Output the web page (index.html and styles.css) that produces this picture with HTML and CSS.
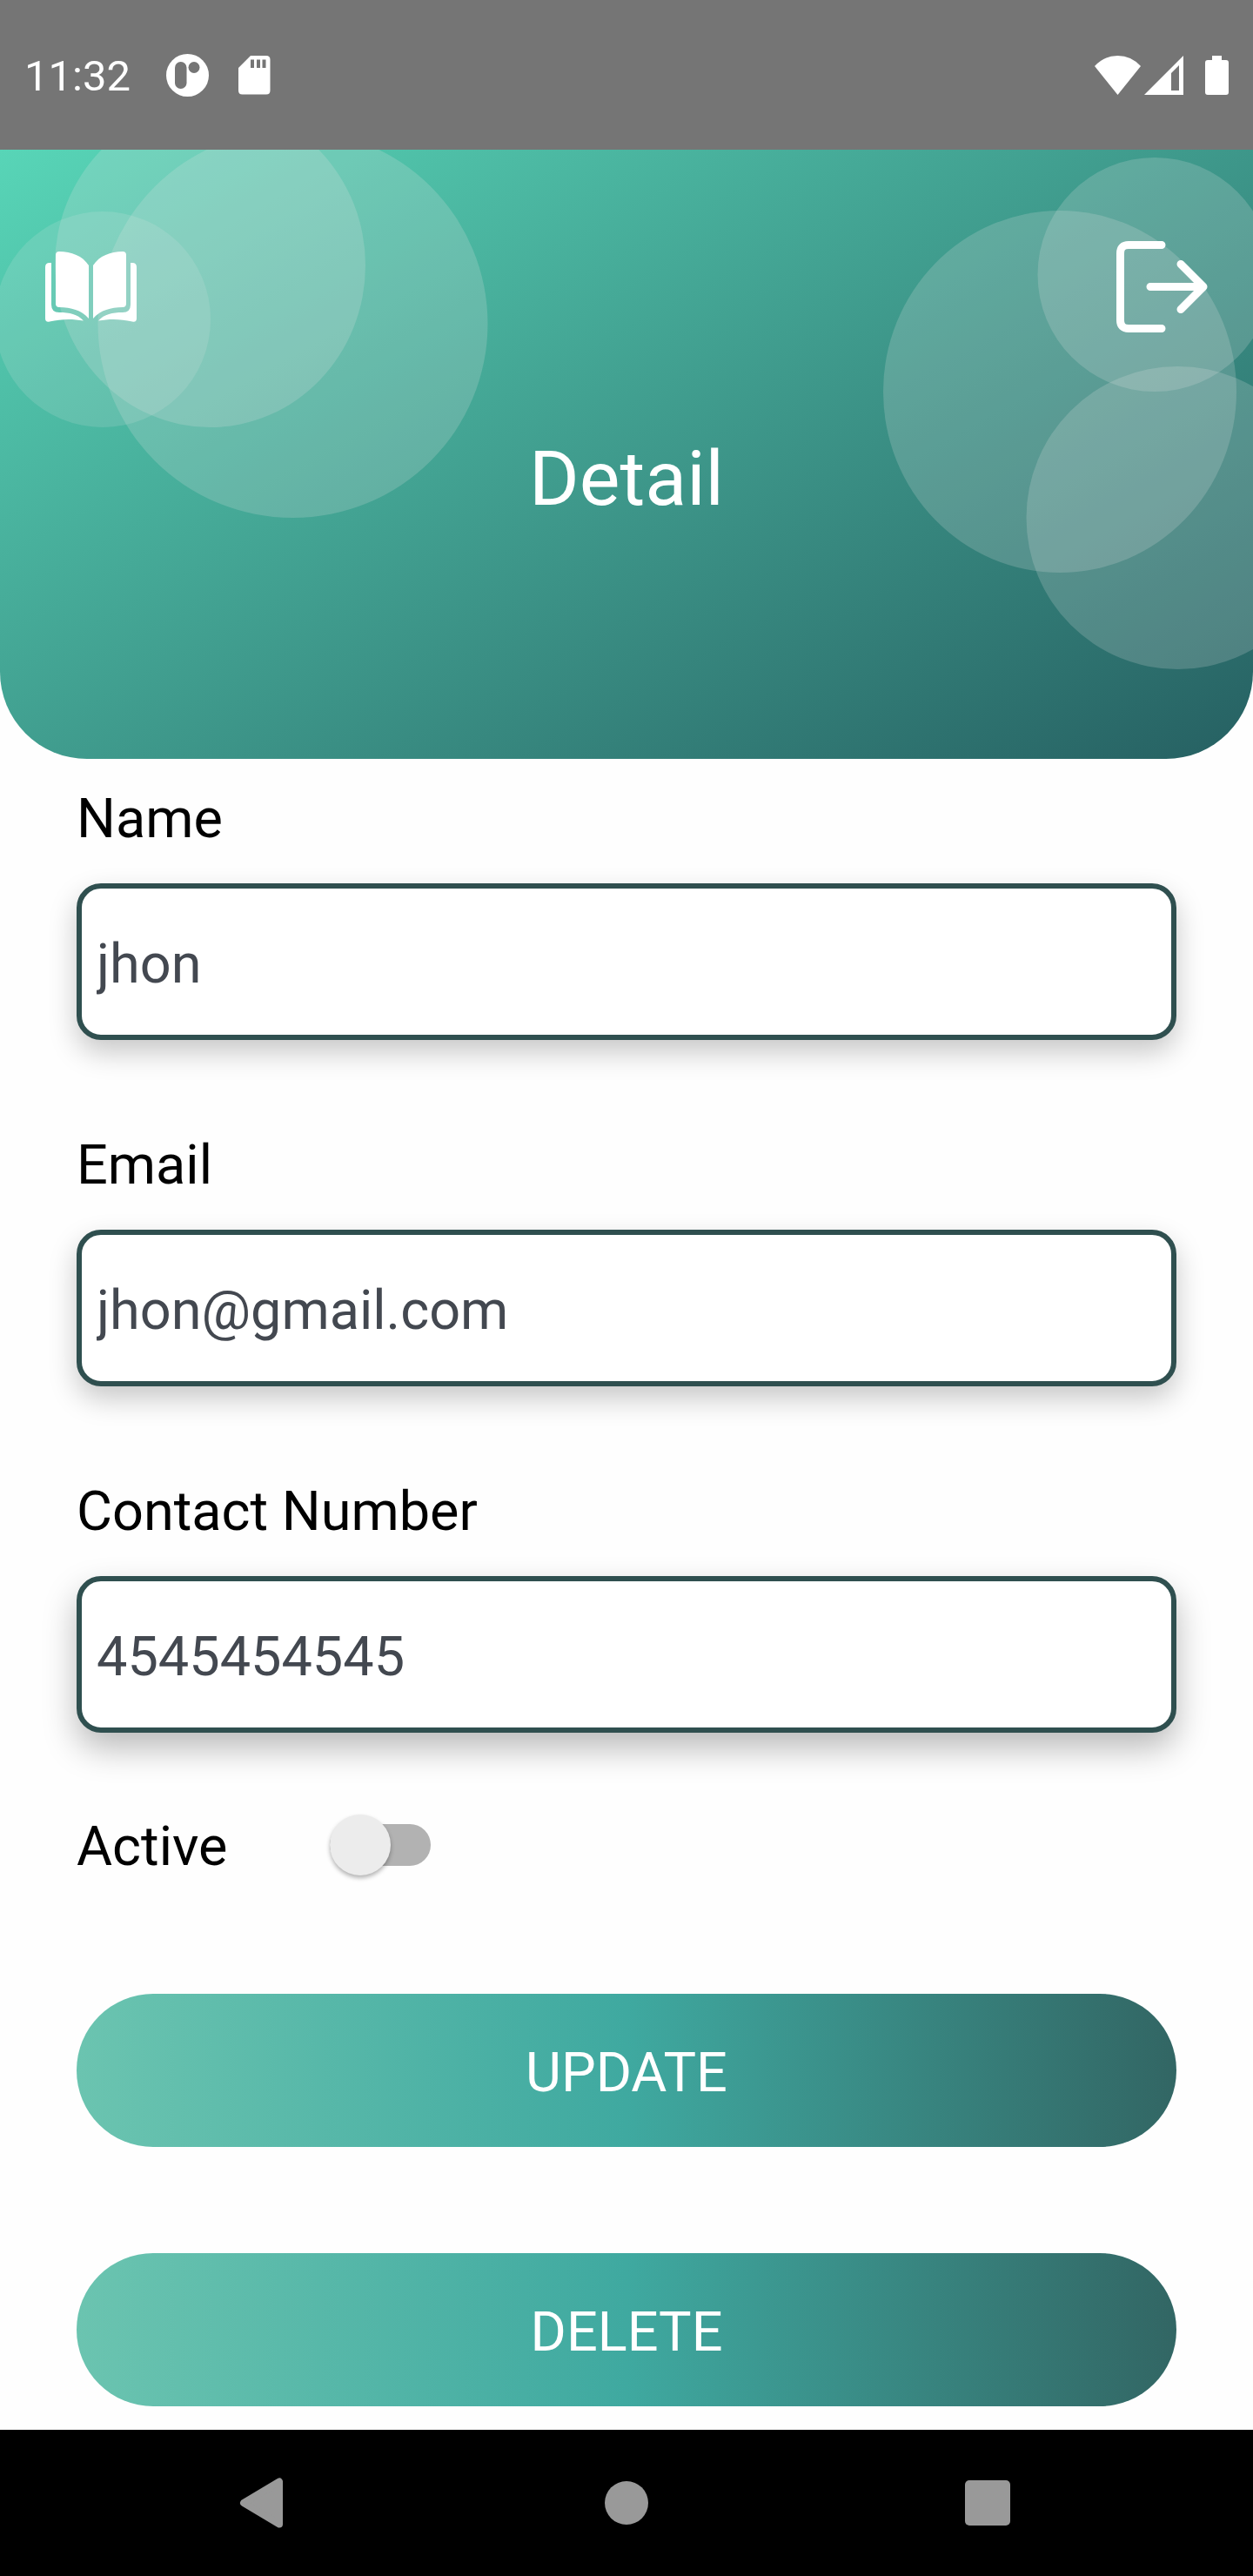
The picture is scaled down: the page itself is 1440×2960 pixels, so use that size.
FILE: index.html
```html
<!DOCTYPE html>
<html lang="en">
<head>
  <meta charset="utf-8">
  <meta name="viewport" content="width=device-width, initial-scale=1">
  <title>Detail</title>
  <link rel="stylesheet" href="styles.css">
</head>
<body>
  <div class="status-bar">
    <div class="status-group">
      <span class="clock">11:32</span>
      <svg width="49" height="49" viewBox="0 0 49 49" aria-hidden="true">
        <circle cx="24.5" cy="24.5" r="24.5" fill="#fff"/>
        <rect x="10" y="9" width="13.500" height="31" rx="6.700" fill="#757575"/>
        <circle cx="32" cy="15.500" r="6.500" fill="#757575"/>
      </svg>
      <svg width="37" height="45" viewBox="0 0 37 45" aria-hidden="true">
        <path fill="#fff" fill-rule="evenodd" d="M14 0H32Q36.500 0 36.500 4.500V40Q36.500 44.500 32 44.500H4.500Q0 44.500 0 40V14ZM14 4.500V14H18V4.500ZM21 4.500V14H25V4.500ZM27.500 4.500V14H31.500V4.500Z"/>
      </svg>
    </div>
    <div class="status-group status-group-end">
      <div class="signals">
        <svg width="53" height="45" viewBox="0 0 53 45" aria-hidden="true">
          <path fill="#fff" d="M26.500 45L0 12Q11 0 26.500 0T53 12Z"/>
        </svg>
        <svg width="45" height="45" viewBox="0 0 45 45" aria-hidden="true">
          <path fill="#fff" fill-rule="evenodd" d="M0 45L45 0V45ZM31 20V40H40V11Z"/>
        </svg>
      </div>
      <svg width="27" height="45" viewBox="0 0 27 45" aria-hidden="true">
        <path fill="#fff" d="M8 0H19V5H24Q27 5 27 8V42Q27 45 24 45H3Q0 45 0 42V8Q0 5 3 5H8Z"/>
      </svg>
    </div>
  </div>

  <header class="hero">
    <svg class="bubbles" viewBox="0 0 1440 700" preserveAspectRatio="none" aria-hidden="true">
      <ellipse class="bubble-faint" cx="118" cy="195" rx="124" ry="124"/>
      <ellipse cx="241.500" cy="133" rx="178.500" ry="186"/>
      <ellipse cx="336.500" cy="200" rx="224" ry="223"/>
      <ellipse cx="1218" cy="278" rx="203" ry="208"/>
      <ellipse cx="1327" cy="143.500" rx="134.500" ry="134.500"/>
      <ellipse cx="1353.500" cy="423" rx="174" ry="174"/>
    </svg>
    <div class="toolbar">
      <button class="icon-button" type="button" aria-label="Catalogue">
        <svg width="105" height="105" viewBox="0 0 105 105" fill="#fff" aria-hidden="true">
          <path d="M12 16Q12 12 16 12C30 12 43 17 50 28V89C41 79 30 76.500 16 76Q12 76 12 72Z"/>
          <path d="M93 16Q93 12 89 12C75 12 62 17 55 28V89C64 79 75 76.500 89 76Q93 76 93 72Z"/>
          <path d="M0 30Q0 25 5 25H7V73Q7 82 16 82C28 82 37 84 44 91.500C30 89 18 89.500 5 92.500Q0 93.500 0 89Z"/>
          <path d="M105 30Q105 25 100 25H98V73Q98 82 89 82C77 82 68 84 61 91.500C75 89 87 89.500 100 92.500Q105 93.500 105 89Z"/>
        </svg>
      </button>
      <button class="icon-button" type="button" aria-label="Log out">
        <svg width="105" height="105" viewBox="0 0 105 105" fill="none" stroke="#fff" stroke-width="9" stroke-linecap="round" stroke-linejoin="round" aria-hidden="true">
          <path d="M52 4.500H14Q4.500 4.500 4.500 14V91Q4.500 100.500 14 100.500H52"/>
          <path d="M39 52.500H100M74 26.500L100 52.500L74 78.500"/>
        </svg>
      </button>
    </div>
    <h1 class="title">Detail</h1>
  </header>

  <main class="content">
    <form class="form">
      <div class="field">
        <label for="name">Name</label>
        <input class="text-input" id="name" type="text" value="jhon">
      </div>
      <div class="field">
        <label for="email">Email</label>
        <input class="text-input" id="email" type="email" value="jhon@gmail.com">
      </div>
      <div class="field field-low">
        <label for="contact">Contact Number</label>
        <input class="text-input" id="contact" type="tel" value="4545454545">
      </div>
      <div class="switch-row">
        <label class="switch-label" for="active">Active</label>
        <input class="switch" id="active" type="checkbox" role="switch">
      </div>
      <div class="actions">
        <button class="action" type="button">UPDATE</button>
        <button class="action" type="button">DELETE</button>
      </div>
    </form>
  </main>

  <nav class="nav-bar" aria-label="System">
    <button class="nav-button" type="button" aria-label="Back">
      <svg width="60" height="60" viewBox="0 0 60 60" aria-hidden="true">
        <path fill="#999" stroke="#999" stroke-width="8" stroke-linejoin="round" d="M5 30L46 5.500V54.500Z"/>
      </svg>
    </button>
    <button class="nav-button" type="button" aria-label="Home">
      <svg width="60" height="60" viewBox="0 0 60 60" aria-hidden="true">
        <circle cx="30" cy="30" r="25" fill="#999"/>
      </svg>
    </button>
    <button class="nav-button" type="button" aria-label="Recent apps">
      <svg width="60" height="60" viewBox="0 0 60 60" aria-hidden="true">
        <rect x="4" y="4" width="52" height="52" rx="5" fill="#999"/>
      </svg>
    </button>
  </nav>
</body>
</html>
```
FILE: styles.css
```css
*,
*::before {
  box-sizing: border-box;
}

body {
  display: flex;
  flex-direction: column;
  min-height: 100vh;
  margin: 0;
  background: #fefefe;
  color: #000;
  font-family: Roboto, "Liberation Sans", sans-serif;
  font-size: 63px;
  line-height: 74px;
}

svg {
  display: block;
  flex: none;
}

button {
  padding: 0;
  border: 0;
  background: none;
  color: inherit;
  font: inherit;
}

/* Status bar */
.status-bar {
  display: flex;
  align-items: center;
  justify-content: space-between;
  height: 172px;
  padding: 0 28px;
  background: #757575;
  color: #fff;
}

.status-group {
  display: flex;
  align-items: center;
  gap: 34px;
}

.status-group-end {
  gap: 25px;
}

.clock {
  margin-right: 7px;
  padding-top: 4px;
  font-size: 49px;
}

.signals {
  display: flex;
  gap: 4px;
}

/* Header */
.hero {
  position: relative;
  height: 700px;
  padding: 105px 52px 0;
  overflow: hidden;
  border-radius: 0 0 100px 100px;
  background: linear-gradient(151deg, #58d5b7, #266062);
  color: #fff;
}

.bubbles {
  position: absolute;
  inset: 0;
  width: 100%;
  height: 100%;
  fill: #e8e8e8;
  fill-opacity: 0.2;
}

.bubble-faint {
  fill-opacity: 0.15;
}

.toolbar {
  position: relative;
  display: flex;
  justify-content: space-between;
}

.title {
  position: relative;
  margin: 116px 0 0;
  font-size: 88px;
  font-weight: 400;
  line-height: 104px;
  text-align: center;
}

/* Form */
.content {
  flex: 1;
  padding: 32px 88px 27px;
}

.field {
  --shadow: 0 14px 32px rgba(0, 0, 0, 0.22);
  display: flex;
  flex-direction: column;
  gap: 37px;
  margin-bottom: 107px;
}

.field-low {
  --shadow: 0 18px 38px rgba(0, 0, 0, 0.27);
  margin-bottom: 94px;
}

.text-input {
  width: 100%;
  height: 180px;
  padding: 4px 17px 0;
  border: 6px solid #2f4f4f;
  border-radius: 28px;
  background: #fff;
  box-shadow: var(--shadow);
  color: #434850;
  font: inherit;
}

.switch-row {
  display: flex;
  align-items: flex-start;
}

.switch-label {
  min-width: 291px;
}

.switch {
  width: 116px;
  height: 48px;
  margin: 11px 0;
  border-radius: 24px;
  appearance: none;
  background: #b2b2b2;
}

.switch::before {
  content: "";
  display: block;
  width: 70px;
  height: 70px;
  margin-top: -11px;
  border-radius: 50%;
  background: #ececec;
  box-shadow: 0 3px 5px rgba(0, 0, 0, 0.3);
}

.switch:checked::before {
  margin-left: 46px;
}

.actions {
  display: flex;
  flex-direction: column;
  gap: 122px;
  margin-top: 132px;
}

.action {
  height: 176px;
  padding-top: 6px;
  border-radius: 88px;
  background: linear-gradient(to right, #6bc4b0, #3fa9a0 50%, #326664);
  color: #fff;
}

/* Navigation bar */
.nav-bar {
  display: grid;
  grid-template-columns: repeat(3, 1fr);
  align-items: center;
  height: 168px;
  padding: 0 97px;
  background: #000;
}

.nav-button {
  display: flex;
  justify-content: center;
}
```
